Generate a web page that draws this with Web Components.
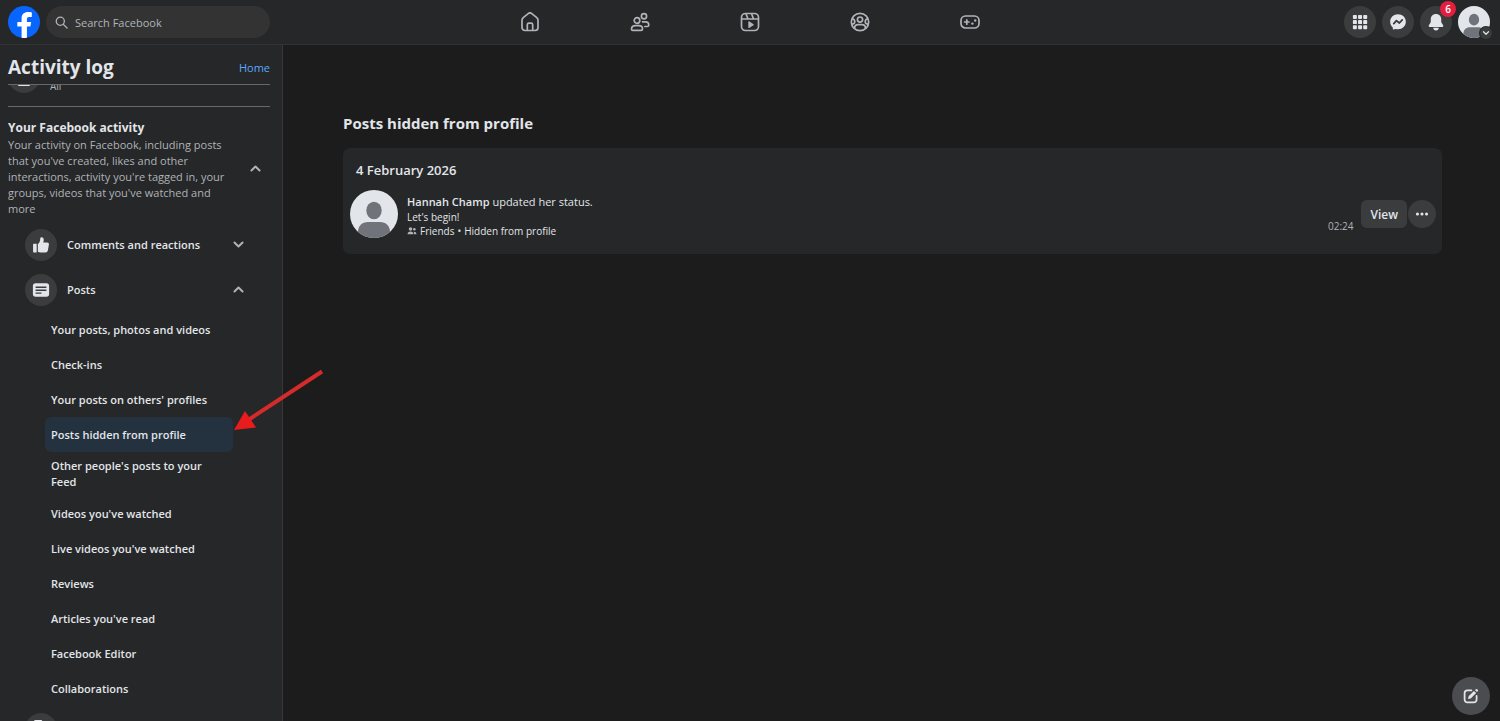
<!DOCTYPE html>
<html lang="en">
<head>
<meta charset="utf-8">
<title>Activity log</title>
<style>
    html, body {
        height: 100%;
    }
    body {
        margin: 0;
        overflow: hidden;
        background: #1c1c1d;
        color: #e2e5e9;
        font-family: "Open Sans", "Noto Sans", sans-serif;
        font-size: 11px;
        --surface: #252728;
        --button: #3b3c3d;
        --muted: #b0b3b8;
        --line: #65686c;
    }
</style>
</head>
<body>
<app-shell>
    <top-bar slot="top"></top-bar>
    <activity-sidebar slot="side">
        <activity-section heading="Your Facebook activity">
            <span slot="about">Your activity on Facebook, including posts that you've created, likes and other interactions, activity you're tagged in, your groups, videos that you've watched and more</span>
            <activity-group icon="like" label="Comments and reactions"></activity-group>
            <activity-group icon="post" label="Posts" open>
                <activity-link>Your posts, photos and videos</activity-link>
                <activity-link>Check-ins</activity-link>
                <activity-link>Your posts on others' profiles</activity-link>
                <activity-link active>Posts hidden from profile</activity-link>
                <activity-link>Other people's posts to your Feed</activity-link>
                <activity-link>Videos you've watched</activity-link>
                <activity-link>Live videos you've watched</activity-link>
                <activity-link>Reviews</activity-link>
                <activity-link>Articles you've read</activity-link>
                <activity-link>Facebook Editor</activity-link>
                <activity-link>Collaborations</activity-link>
            </activity-group>
            <activity-group icon="tag" label=""></activity-group>
        </activity-section>
    </activity-sidebar>
    <log-page heading="Posts hidden from profile">
        <log-day date="4 February 2026">
            <log-entry time="02:24">
                <b slot="who">Hannah Champ</b>
                <span slot="what">updated her status.</span>
                <span slot="text">Let's begin!</span>
                <span slot="audience">Friends</span>
                <span slot="state">Hidden from profile</span>
            </log-entry>
        </log-day>
    </log-page>
</app-shell>

<script>
const icons = {
    logo: `<path fill="#0866ff" d="M15 35.8C6.5 34.3 0 26.9 0 18 0 8.1 8.1 0 18 0s18 8.1 18 18c0 8.9-6.5 16.3-15 17.8h-6z"/><path fill="#fff" d="M25.2 23.2l.9-5.2h-4.800v-3c0-1.500.7-2.500 2.700-2.500h2.800V7.300c-1.300-.3-2.700-.5-4.200-.5-4.300 0-7.300 2.500-7.300 7V18h-4.800v5.200h4.800v12.500c1 .2 1.800.3 2.700.3 1.100 0 2.200-.1 3.300-.3V23.200z"/>`,
    search: `<g fill="none" stroke="currentColor" stroke-width="1.6" stroke-linecap="round"><circle cx="6.5" cy="6.5" r="5"/><path d="M10.3 10.3l4.5 4.5"/></g>`,
    home: `<g fill="none" stroke="currentColor" stroke-width="1.7" stroke-linejoin="round"><path d="M2 8.200c0-1 .4-1.900 1.200-2.500l5-4.100a2.800 2.800 0 0 1 3.600 0l5 4.100c.8.600 1.200 1.500 1.200 2.500v7.300a3 3 0 0 1-3 3H5a3 3 0 0 1-3-3z"/><path d="M7.300 18.300v-5.500c0-.9.700-1.600 1.600-1.600h2.200c.9 0 1.600.7 1.600 1.600v5.500"/></g>`,
    friends: `<g fill="none" stroke="currentColor" stroke-width="1.7" stroke-linecap="round" stroke-linejoin="round"><circle cx="7" cy="8.500" r="2.800"/><circle cx="14" cy="4.300" r="2.600"/><path d="M1.500 17c0-2.300 1.800-3.300 3.600-3.300h3.800c1.800 0 3.600 1 3.600 3.300 0 .8-.6 1.400-1.400 1.400H2.900c-.8 0-1.400-.6-1.400-1.400z"/><path d="M12.500 9.800h3c1.800 0 3.300 1.100 3.300 3.200 0 .9-.6 1.500-1.500 1.500h-2.500"/></g>`,
    reels: `<g fill="none" stroke="currentColor" stroke-width="1.7"><rect x="1.500" y="1.500" width="17" height="17" rx="4"/><path d="M1.500 7h17M6 1.800L8 7M11.500 1.500l2 5.500"/></g><path fill="currentColor" d="M8.300 9.800v5.600c0 .5.500.7.9.5l4.300-2.700c.4-.3.4-.8 0-1L9.200 9.300c-.4-.2-.9 0-.9.5z"/>`,
    groups: `<g fill="none" stroke="currentColor" stroke-width="1.7"><circle cx="10" cy="10" r="8.700"/><circle cx="10" cy="7.600" r="2.600"/><path d="M4.700 16.600c-.4-2.500 1.200-4 3.300-4h4c2.100 0 3.700 1.500 3.300 4M2 6.800c1.700 0 2.800 1.200 2.800 2.700S3.700 12.200 1.600 12.200M18 6.800c-1.700 0-2.800 1.200-2.800 2.700s1.100 2.700 3.200 2.700"/></g>`,
    gaming: `<g fill="none" stroke="currentColor" stroke-width="1.7" stroke-linecap="round"><rect x="1" y="4" width="18" height="12" rx="4.500"/><path d="M6.800 7.800v4.400M4.600 10H9"/></g><circle cx="12.400" cy="11.600" r="1.200" fill="currentColor"/><circle cx="15.200" cy="8.500" r="1.200" fill="currentColor"/>`,
    grid: `<g fill="currentColor"><rect x="1" y="1" width="4.500" height="4.500" rx="1"/><rect x="6.800" y="1" width="4.500" height="4.500" rx="1"/><rect x="12.600" y="1" width="4.500" height="4.500" rx="1"/><rect x="1" y="6.800" width="4.500" height="4.500" rx="1"/><rect x="6.800" y="6.800" width="4.500" height="4.500" rx="1"/><rect x="12.600" y="6.800" width="4.500" height="4.500" rx="1"/><rect x="1" y="12.600" width="4.500" height="4.500" rx="1"/><rect x="6.800" y="12.600" width="4.500" height="4.500" rx="1"/><rect x="12.600" y="12.600" width="4.500" height="4.500" rx="1"/></g>`,
    messenger: `<path fill="currentColor" d="M10 1.500c-4.900 0-8.700 3.500-8.700 8.200 0 2.500 1 4.600 2.700 6.100.2.200.2.300.2.500l.1 1.500c0 .5.5.8 1 .6l1.700-.7h.5c.8.2 1.600.3 2.500.3 4.900 0 8.700-3.500 8.700-8.300S14.900 1.500 10 1.500z"/><path fill="none" stroke="#3b3c3d" stroke-width="2" stroke-linejoin="round" stroke-linecap="round" d="M5.300 11.800l3-3.300 3.200 2.600 3.200-3.500"/>`,
    bell: `<path fill="currentColor" d="M10 1c-3.400 0-5.800 2.400-5.800 5.800v2.600c0 .8-.3 1.600-.9 2.400l-1.100 1.400c-.8 1.100 0 2.400 1.300 2.400h13c1.300 0 2.100-1.300 1.300-2.400l-1.100-1.400c-.6-.8-.9-1.600-.9-2.400V6.800C15.800 3.400 13.400 1 10 1zM7 16.400h6a3 3 0 0 1-6 0z"/>`,
    avatar: `<defs><clipPath id="round"><circle cx="24" cy="24" r="24"/></clipPath></defs><g clip-path="url(#round)"><rect width="48" height="48" fill="#e2e5e9"/><g fill="#70747a"><ellipse cx="24" cy="20.500" rx="7.700" ry="8.700"/><path d="M8 48v-6c0-6 4-10 10-10h12c6 0 10 4 10 10v6z"/></g></g>`,
    down: `<path fill="none" stroke="currentColor" stroke-width="2.4" stroke-linecap="round" stroke-linejoin="round" d="M3 5.500l5 5 5-5"/>`,
    up: `<path fill="none" stroke="currentColor" stroke-width="2.4" stroke-linecap="round" stroke-linejoin="round" d="M3 10.500l5-5 5 5"/>`,
    like: `<path fill="currentColor" d="M2 8.500h3.200v9.700H2a.8.8 0 0 1-.8-.8V9.300c0-.5.3-.8.8-.8zM6.500 8.800C8.600 7.500 9 5.400 9.100 3c0-1 .6-1.700 1.500-1.700 1.700 0 2.500 1.400 2.500 3 0 1.100-.3 2-.6 3h4.400c1.300 0 2.100 1 1.900 2.200l-1.100 6.200a3 3 0 0 1-3 2.500H9.500c-1.200 0-2.200-.3-3-.8z"/>`,
    post: `<path fill="currentColor" fill-rule="evenodd" d="M4 2.500h12a3 3 0 0 1 3 3v9a3 3 0 0 1-3 3H4a3 3 0 0 1-3-3v-9a3 3 0 0 1 3-3zM4 6.200v1.500h12V6.200zm0 3.300V11h12V9.500zm0 3.300v1.500h6.500v-1.500z"/>`,
    tag: `<path fill="currentColor" d="M4 0h6.500l7.500 8-7 10-9-8V2a2 2 0 0 1 2-2z"/>`,
    list: `<path stroke="currentColor" stroke-width="2" stroke-linecap="round" d="M5 3h10M5 10h10M5 18h10"/>`,
    people: `<g fill="currentColor"><circle cx="6" cy="5" r="3"/><circle cx="12.500" cy="5.500" r="2.200"/><path d="M1 14c0-3 2-4.500 5-4.500s5 1.500 5 4.500zM12 14h4c0-3.500-2-4.500-4.800-4.300.8 1 .9 2.300.8 4.300z"/></g>`,
    more: `<g fill="currentColor"><circle cx="3.500" cy="10" r="2.200"/><circle cx="10" cy="10" r="2.200"/><circle cx="16.500" cy="10" r="2.200"/></g>`,
    compose: `<path fill="none" stroke="currentColor" stroke-width="2.2" stroke-linecap="round" d="M10.500 3h-5A3.500 3.500 0 0 0 2 6.500v8A3.500 3.500 0 0 0 5.500 18h8a3.500 3.500 0 0 0 3.500-3.500V10"/><path fill="currentColor" d="M6.300 13.700l.7-3.400 6.700-6.700 2.700 2.700-6.700 6.700zM14.900 2.600l.8-.8a1.700 1.700 0 0 1 2.500 2.500l-.8.800z"/>`
};

const boxes = { logo: 36, search: 16, grid: 18, avatar: 48, down: 16, up: 16, people: 17 };

class UiIcon extends HTMLElement {
    constructor() {
        super();
        this.shadowDom = this.attachShadow({ mode: 'open' });
    }
    connectedCallback() {
        const name = this.getAttribute('name');
        const box = boxes[name] || 20;
        const size = this.getAttribute('size') || 20;
        this.shadowDom.innerHTML = `
            <style>
                :host {
                    display: block;
                    flex: none;
                }
                svg {
                    display: block;
                }
            </style>
            <svg width="${size}" height="${size}" viewBox="0 0 ${box} ${box}" aria-hidden="true">${icons[name]}</svg>
        `
    }
}

class AppShell extends HTMLElement {
    constructor() {
        super();
        this.shadowDom = this.attachShadow({ mode: 'open' });
        this.shadowDom.innerHTML = `
            <style>
                :host {
                    display: flex;
                    flex-direction: column;
                    height: 100vh;
                }
                .columns {
                    display: flex;
                    flex: 1;
                    min-height: 0;
                }
                .compose {
                    position: fixed;
                    right: 10px;
                    bottom: 6px;
                    display: grid;
                    place-items: center;
                    width: 38px;
                    height: 38px;
                    padding: 0;
                    border: 0;
                    border-radius: 50%;
                    background: #4a4c4f;
                    color: #e2e5e9;
                }
                .pointer {
                    position: absolute;
                    left: 234px;
                    top: 368px;
                }
            </style>
            <slot name="top"></slot>
            <div class="columns">
                <slot name="side"></slot>
                <slot></slot>
            </div>
            <svg class="pointer" width="92" height="66" viewBox="0 0 92 66" aria-hidden="true">
                <path d="M88 3.500L15 51.500" stroke="#d52b2b" stroke-width="4"/>
                <path d="M0 62L11 43 22 59.500z" fill="#e81c1c"/>
            </svg>
            <button class="compose" aria-label="New message"><ui-icon name="compose" size="16"></ui-icon></button>
        `
    }
}

class TopBar extends HTMLElement {
    constructor() {
        super();
        this.shadowDom = this.attachShadow({ mode: 'open' });
        this.shadowDom.innerHTML = `
            <style>
                :host {
                    display: grid;
                    grid-template-columns: 1fr auto 1fr;
                    align-items: center;
                    height: 44px;
                    border-bottom: 1px solid #303233;
                    background: var(--surface);
                }
                .left, .right, nav {
                    display: flex;
                    align-items: center;
                }
                .left {
                    gap: 6px;
                    padding-left: 8px;
                }
                .search {
                    display: flex;
                    align-items: center;
                    gap: 7px;
                    box-sizing: border-box;
                    width: 224px;
                    height: 32px;
                    padding: 0 9px;
                    border-radius: 16px;
                    background: #333334;
                    color: var(--muted);
                }
                input {
                    flex: 1;
                    min-width: 0;
                    padding: 0;
                    border: 0;
                    outline: 0;
                    background: none;
                    color: inherit;
                    font: inherit;
                }
                input::placeholder {
                    color: var(--muted);
                    opacity: 1;
                }
                nav a {
                    display: grid;
                    place-items: center;
                    width: 110px;
                    height: 44px;
                    color: var(--muted);
                }
                .right {
                    justify-content: flex-end;
                    gap: 6px;
                    padding-right: 10px;
                }
                button {
                    position: relative;
                    display: grid;
                    place-items: center;
                    width: 32px;
                    height: 32px;
                    padding: 0;
                    border: 0;
                    border-radius: 50%;
                    background: var(--button);
                    color: #e2e5e9;
                    font: inherit;
                }
                .badge {
                    position: absolute;
                    top: -5px;
                    right: -4px;
                    width: 16px;
                    border-radius: 8px;
                    background: #e41e3f;
                    color: #fff;
                    font-size: 10px;
                    font-weight: 600;
                    line-height: 16px;
                    text-align: center;
                }
                .caret {
                    position: absolute;
                    right: -2px;
                    bottom: -1px;
                    padding: 2px;
                    border-radius: 50%;
                    background: var(--button);
                    box-shadow: 0 0 0 1px var(--surface);
                }
            </style>
            <div class="left">
                <a href="#" aria-label="Facebook"><ui-icon name="logo" size="32"></ui-icon></a>
                <label class="search">
                    <ui-icon name="search" size="13"></ui-icon>
                    <input type="search" placeholder="Search Facebook" aria-label="Search Facebook">
                </label>
            </div>
            <nav>
                <a href="#" aria-label="Home"><ui-icon name="home"></ui-icon></a>
                <a href="#" aria-label="Friends"><ui-icon name="friends"></ui-icon></a>
                <a href="#" aria-label="Reels"><ui-icon name="reels"></ui-icon></a>
                <a href="#" aria-label="Groups"><ui-icon name="groups"></ui-icon></a>
                <a href="#" aria-label="Gaming"><ui-icon name="gaming"></ui-icon></a>
            </nav>
            <div class="right">
                <button aria-label="Menu"><ui-icon name="grid" size="16"></ui-icon></button>
                <button aria-label="Messenger"><ui-icon name="messenger" size="18"></ui-icon></button>
                <button aria-label="Notifications"><ui-icon name="bell" size="18"></ui-icon><span class="badge">6</span></button>
                <button aria-label="Account"><ui-icon name="avatar" size="32"></ui-icon><ui-icon class="caret" name="down" size="8"></ui-icon></button>
            </div>
        `
    }
}

class ActivitySidebar extends HTMLElement {
    constructor() {
        super();
        this.shadowDom = this.attachShadow({ mode: 'open' });
        this.shadowDom.innerHTML = `
            <style>
                :host {
                    display: flex;
                    flex-direction: column;
                    flex: none;
                    box-sizing: border-box;
                    width: 283px;
                    padding: 0 12px 0 8px;
                    border-right: 1px solid #353738;
                    background: var(--surface);
                }
                header {
                    display: flex;
                    align-items: center;
                    justify-content: space-between;
                    box-sizing: border-box;
                    height: 40px;
                    padding-top: 5px;
                    border-bottom: 1px solid var(--line);
                }
                h1 {
                    margin: 0;
                    font-size: 19px;
                    line-height: 24px;
                }
                a {
                    color: #5aa7ff;
                    text-decoration: none;
                }
                .scroller {
                    flex: 1;
                    min-height: 0;
                    overflow-y: auto;
                    scrollbar-width: none;
                }
                .filter {
                    display: flex;
                    align-items: flex-end;
                    gap: 10px;
                    padding-bottom: 13px;
                    border-bottom: 1px solid var(--line);
                    color: var(--muted);
                    font-size: 10px;
                    line-height: 14px;
                }
                .disc {
                    display: grid;
                    place-items: center;
                    width: 32px;
                    height: 32px;
                    border-radius: 50%;
                    background: var(--button);
                    color: #e2e5e9;
                }
            </style>
            <header>
                <h1>Activity log</h1>
                <a href="#">Home</a>
            </header>
            <div class="scroller">
                <div class="filter">
                    <span class="disc"><ui-icon name="list"></ui-icon></span>
                    <span>All</span>
                </div>
                <slot></slot>
            </div>
        `
    }
    connectedCallback() {
        // most of the filter row is scrolled under the header
        requestAnimationFrame(() => {
            this.shadowDom.querySelector('.scroller').scrollTop = 24;
        });
    }
}

class ActivitySection extends HTMLElement {
    constructor() {
        super();
        this.shadowDom = this.attachShadow({ mode: 'open' });
        this.shadowDom.innerHTML = `
            <style>
                :host {
                    display: block;
                    padding-top: 12px;
                }
                .head {
                    display: flex;
                    align-items: center;
                    justify-content: space-between;
                    width: 100%;
                    margin-bottom: 5px;
                    padding: 0 8px 0 0;
                    border: 0;
                    background: none;
                    color: inherit;
                    font: inherit;
                    text-align: left;
                }
                .text {
                    display: block;
                    width: 226px;
                    color: var(--muted);
                    line-height: 16px;
                }
                strong {
                    display: block;
                    color: #e2e5e9;
                    font-size: 12px;
                    font-weight: 700;
                    line-height: 18px;
                }
                ui-icon {
                    color: var(--muted);
                }
            </style>
            <button class="head" aria-expanded="true">
                <span class="text"><strong></strong><slot name="about"></slot></span>
                <ui-icon name="up" size="13"></ui-icon>
            </button>
            <slot></slot>
        `
    }
    connectedCallback() {
        this.shadowDom.querySelector('strong').textContent = this.getAttribute('heading');
    }
}

class ActivityGroup extends HTMLElement {
    constructor() {
        super();
        this.shadowDom = this.attachShadow({ mode: 'open' });
    }
    connectedCallback() {
        const open = this.hasAttribute('open');
        this.shadowDom.innerHTML = `
            <style>
                :host {
                    display: block;
                }
                button {
                    display: flex;
                    align-items: center;
                    gap: 10px;
                    width: 100%;
                    height: 45px;
                    padding: 0 25px 0 17px;
                    border: 0;
                    background: none;
                    color: inherit;
                    font: inherit;
                    font-weight: 600;
                    text-align: left;
                }
                .disc {
                    display: grid;
                    place-items: center;
                    width: 32px;
                    height: 32px;
                    border-radius: 50%;
                    background: var(--button);
                }
                .label {
                    flex: 1;
                }
                .chevron {
                    color: var(--muted);
                }
                .links {
                    padding: 0 37px;
                }
            </style>
            <button aria-expanded="${open}">
                <span class="disc"><ui-icon name="${this.getAttribute('icon')}" size="18"></ui-icon></span>
                <span class="label">${this.getAttribute('label')}</span>
                <ui-icon class="chevron" name="${open ? 'up' : 'down'}" size="13"></ui-icon>
            </button>
            <div class="links"><slot></slot></div>
        `
    }
}

class ActivityLink extends HTMLElement {
    constructor() {
        super();
        this.shadowDom = this.attachShadow({ mode: 'open' });
        this.shadowDom.innerHTML = `
            <style>
                :host {
                    display: block;
                }
                a {
                    display: flex;
                    align-items: center;
                    box-sizing: border-box;
                    min-height: 35px;
                    padding: 6px 12px 6px 6px;
                    border-radius: 6px;
                    color: inherit;
                    font-weight: 600;
                    line-height: 16px;
                    text-decoration: none;
                }
                :host([active]) a {
                    background: #24313e;
                }
            </style>
            <a href="#"><span><slot></slot></span></a>
        `
    }
}

class LogPage extends HTMLElement {
    constructor() {
        super();
        this.shadowDom = this.attachShadow({ mode: 'open' });
        this.shadowDom.innerHTML = `
            <style>
                :host {
                    display: block;
                    flex: 1;
                    min-width: 0;
                    padding: 68px 58px 0 60px;
                }
                h2 {
                    margin: 0 0 15px;
                    font-size: 15px;
                    line-height: 20px;
                }
            </style>
            <h2></h2>
            <slot></slot>
        `
    }
    connectedCallback() {
        this.shadowDom.querySelector('h2').textContent = this.getAttribute('heading');
    }
}

class LogDay extends HTMLElement {
    constructor() {
        super();
        this.shadowDom = this.attachShadow({ mode: 'open' });
        this.shadowDom.innerHTML = `
            <style>
                :host {
                    display: block;
                    padding: 12px 6px 16px 7px;
                    border-radius: 7px;
                    background: var(--surface);
                }
                h3 {
                    margin: 0 0 10px;
                    padding-left: 6px;
                    font-size: 13px;
                    font-weight: 600;
                    line-height: 20px;
                }
            </style>
            <h3></h3>
            <slot></slot>
        `
    }
    connectedCallback() {
        this.shadowDom.querySelector('h3').textContent = this.getAttribute('date');
    }
}

class LogEntry extends HTMLElement {
    constructor() {
        super();
        this.shadowDom = this.attachShadow({ mode: 'open' });
        this.shadowDom.innerHTML = `
            <style>
                :host {
                    display: flex;
                    align-items: center;
                    gap: 8px;
                }
                .body {
                    flex: 1;
                    padding: 4px 0 0 1px;
                    font-size: 10px;
                    line-height: 14px;
                }
                .title {
                    font-size: 11px;
                    line-height: 16px;
                }
                ::slotted(b) {
                    font-weight: 600;
                }
                .meta {
                    display: flex;
                    align-items: center;
                    gap: 3px;
                }
                .meta ui-icon {
                    color: var(--muted);
                }
                time {
                    align-self: flex-end;
                    padding-bottom: 5px;
                    color: var(--muted);
                    font-size: 10px;
                    line-height: 14px;
                }
                .actions {
                    display: flex;
                    gap: 1px;
                }
                button {
                    display: grid;
                    place-items: center;
                    height: 28px;
                    padding: 0 9px;
                    border: 0;
                    border-radius: 6px;
                    background: var(--button);
                    color: #e2e5e9;
                    font: inherit;
                    font-size: 12px;
                    font-weight: 600;
                }
                .more {
                    width: 28px;
                    padding: 0;
                    border-radius: 50%;
                }
            </style>
            <ui-icon name="avatar" size="48"></ui-icon>
            <div class="body">
                <div class="title"><slot name="who"></slot> <slot name="what"></slot></div>
                <div><slot name="text"></slot></div>
                <div class="meta"><ui-icon name="people" size="10"></ui-icon><slot name="audience"></slot><span>•</span><slot name="state"></slot></div>
            </div>
            <time></time>
            <div class="actions">
                <button>View</button>
                <button class="more" aria-label="More options"><ui-icon name="more" size="14"></ui-icon></button>
            </div>
        `
    }
    connectedCallback() {
        this.shadowDom.querySelector('time').textContent = this.getAttribute('time');
    }
}

window.customElements.define('ui-icon', UiIcon);
window.customElements.define('top-bar', TopBar);
window.customElements.define('activity-sidebar', ActivitySidebar);
window.customElements.define('activity-section', ActivitySection);
window.customElements.define('activity-group', ActivityGroup);
window.customElements.define('activity-link', ActivityLink);
window.customElements.define('log-page', LogPage);
window.customElements.define('log-day', LogDay);
window.customElements.define('log-entry', LogEntry);
window.customElements.define('app-shell', AppShell);
</script>
</body>
</html>
